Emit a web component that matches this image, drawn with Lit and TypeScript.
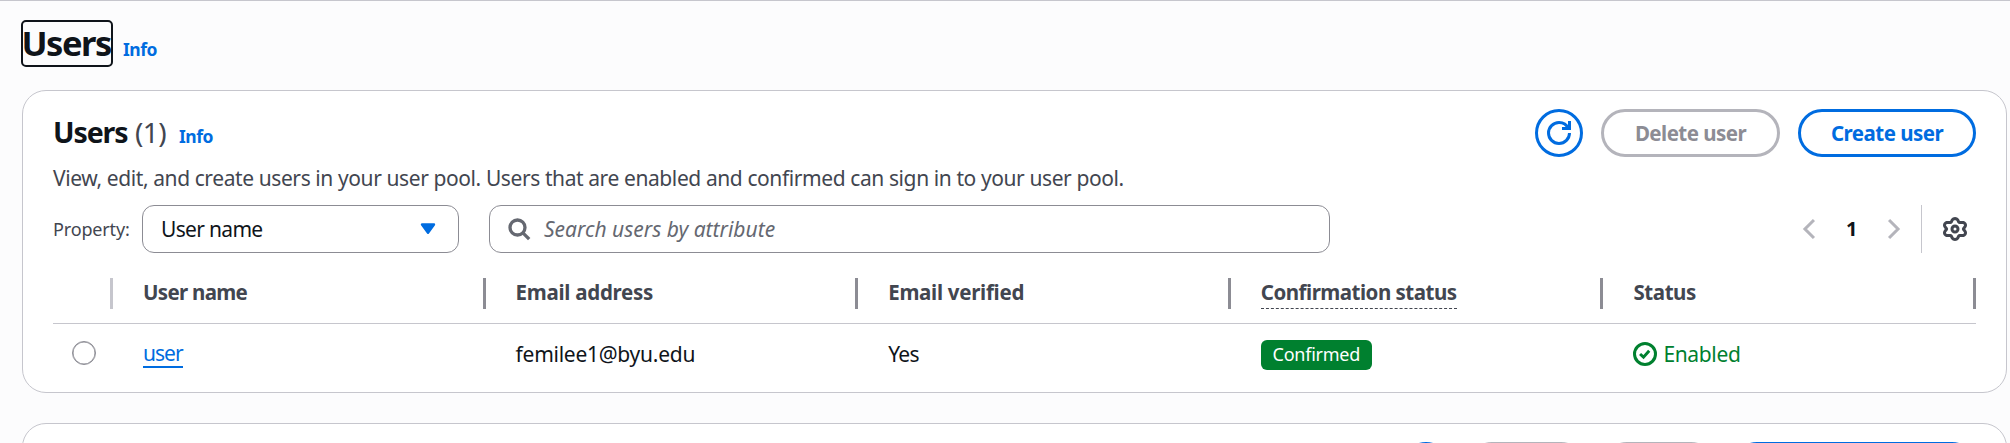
import { LitElement, html, css, svg } from "lit";
import { customElement } from "lit/decorators.js";

const gearOutline = (): string => {
  const points: string[] = [];
  for (let i = 0; i < 96; i++) {
    const t = (i / 96) * Math.PI * 2;
    const r = 6.1 + 0.95 * Math.cos(6 * t) - 0.12 * Math.cos(12 * t);
    const x = 8 + 1.12 * r * Math.sin(t);
    const y = 8 - r * Math.cos(t);
    points.push(`${x.toFixed(2)} ${y.toFixed(2)}`);
  }
  return `M${points.join("L")}Z`;
};

const icon = (name: string, body: unknown) =>
  html`<svg class="icon ${name}" viewBox="0 0 16 16">${body}</svg>`;

const refreshIcon = icon(
  "refresh-icon",
  svg`<path d="M10 5h5V0"/><path d="M15 8a7 7 0 0 1-14 0 7 7 0 0 1 7-7 6.9 6.9 0 0 1 6.3 4"/>`
);
const searchIcon = icon("search-icon", svg`<circle cx="7" cy="7" r="5"/><path d="m10.6 10.6 4.2 4.2"/>`);
const caretIcon = icon("caret-icon", svg`<path d="M4 5h8l-4 5.5z"/>`);
const prevIcon = icon("angle-icon", svg`<path d="M11.3 2 5.3 8l6 6"/>`);
const nextIcon = icon("angle-icon", svg`<path d="m4.7 2 6 6-6 6"/>`);
const gearIcon = icon("gear-icon", svg`<path d=${gearOutline()}/><circle cx="8" cy="8" r="2"/>`);
const checkIcon = icon("check-icon", svg`<circle cx="8" cy="8" r="7"/><path d="m4.7 8 2.3 2.1 3.8-4.2"/>`);

@customElement("app-root")
export class AppRoot extends LitElement {
  static styles = css`
    :host {
      display: block;
      box-sizing: border-box;
      height: 443px;
      overflow: hidden;
      background: #fcfcfd;
      border-top: 1px solid #c6c6cd;
      padding: 19px 3px 0 21px;
      font: 400 21px/30px "Noto Sans", sans-serif;
      letter-spacing: -0.41px;
      color: #0f141a;
      white-space: nowrap;
    }
    * { box-sizing: border-box; }
    h1, h2, p { margin: 0; }
    .icon {
      display: block;
      flex: none;
      width: 24px;
      height: 24px;
      fill: none;
      stroke: currentColor;
      stroke-width: 2;
    }
    .page-title { display: flex; gap: 10px; height: 70px; }
    h1 {
      width: 92px;
      height: 47px;
      border: 2px solid #0f141a;
      border-radius: 5px;
      font-size: 34.5px;
      line-height: 42px;
      letter-spacing: -1.5px;
      text-indent: -1.5px;
    }
    .info {
      color: #006ce0;
      font-size: 17.5px;
      font-weight: 700;
      letter-spacing: -0.5px;
    }
    .page-title .info { padding-top: 14px; }
    .card {
      width: 1985px;
      margin-left: 1px;
      padding: 18px 30px 0 30px;
      border: 1px solid #c6c6cd;
      border-radius: 24px;
      background: #fff;
    }
    .users-card { height: 303px; }
    .next-card { height: 120px; margin-top: 30px; }
    .card-header { display: flex; justify-content: space-between; height: 83px; }
    .heading { display: flex; padding-top: 5px; height: 53px; line-height: 36px; }
    h2 { width: 82px; font-size: 28.5px; line-height: 36px; letter-spacing: -1.1px; }
    .count { width: 44px; font-size: 28px; letter-spacing: -0.6px; color: #424650; }
    .heading .info { padding-top: 4px; }
    .description { color: #424650; padding-top: 1px; letter-spacing: -0.405px; }
    .actions { display: flex; gap: 18px; height: 48px; }
    .button {
      display: flex;
      align-items: center;
      justify-content: center;
      height: 48px;
      border: 3px solid #006ce0;
      border-radius: 24px;
      color: #006ce0;
      font-size: 20.5px;
      font-weight: 700;
      letter-spacing: -0.53px;
      padding-bottom: 1px;
    }
    .round { width: 48px; padding: 0; }
    .disabled { border-color: #b4b4bb; color: #8c8c94; }
    .delete { width: 179px; }
    .create { width: 178px; }
    .small { width: 117px; }
    .medium { width: 112px; }
    .wide { width: 243px; }
    .toolbar { display: flex; align-items: center; height: 48px; margin-top: 13px; }
    .label { width: 89px; font-size: 18px; letter-spacing: -0.15px; color: #424650; }
    .field {
      display: flex;
      align-items: center;
      height: 48px;
      border: 1px solid #8c8c94;
      border-radius: 12px;
    }
    .select {
      width: 317px;
      justify-content: space-between;
      padding: 0 18px;
      letter-spacing: -0.68px;
    }
    .search { width: 841px; margin-left: 30px; padding-left: 17px; gap: 13px; color: #656871; letter-spacing: 0; }
    .placeholder { font-style: italic; }
    .search-icon { stroke-width: 2.2; }
    .caret-icon { color: #006ce0; fill: currentColor; stroke-width: 1.6; stroke-linejoin: round; }
    .angle-icon { color: #b4b4bb; }
    .pager { display: flex; align-items: center; height: 48px; margin-left: auto; }
    .page-number { width: 61px; text-align: center; font-size: 20px; font-weight: 700; }
    .preferences { display: flex; align-items: center; height: 48px; margin-left: 15px; padding: 0 9px 0 21px; border-left: 1px solid #c6c6cd; color: #424650; }
    .row { display: grid; grid-template-columns: 60px repeat(5, minmax(0, 1fr)); }
    .head {
      height: 71px;
      padding-top: 24px;
      border-bottom: 1px solid #c6c6cd;
      font-size: 20.5px;
      font-weight: 700;
      color: #424650;
    }
    .head-cell { display: flex; align-items: flex-start; justify-content: space-between; padding-left: 30px; }
    .divider { width: 3px; height: 31px; margin-top: 1px; background: #8c8c94; }
    .light { background: #c6c6cd; margin-left: auto; }
    .select-cell { padding-left: 0; }
    .tight { letter-spacing: -0.7px; }
    .loose { letter-spacing: -0.28px; }
    .hint { display: block; height: 32px; border-bottom: 1px dashed #424650; letter-spacing: -0.5px; }
    .cell { padding: 15px 0 0 30px; }
    .radio-cell { padding: 17px 0 0 19px; }
    .radio { width: 24px; height: 24px; border: 1px solid #8c8c94; border-radius: 50%; box-shadow: inset 0 0 0 0.5px #8c8c94; }
    .link {
      display: block;
      width: 40px;
      height: 28px;
      margin-top: 1px;
      line-height: 27px;
      border-bottom: 2px solid #006ce0;
      color: #006ce0;
      letter-spacing: -1px;
    }
    .badge {
      display: block;
      width: 111px;
      height: 30px;
      margin-top: 1px;
      border-radius: 6px;
      background: #00802f;
      color: #fff;
      font-size: 18px;
      line-height: 29px;
      letter-spacing: -0.25px;
      text-align: center;
    }
    .status { display: flex; gap: 6px; color: #00802f; letter-spacing: -0.35px; }
    .check-icon { margin-top: 3px; }
    .email { letter-spacing: -0.26px; }
  `;

  render() {
    return html`
      <div class="page-title">
        <h1>Users</h1>
        <span class="info">Info</span>
      </div>
      <section class="card users-card">
        <div class="card-header">
          <div>
            <div class="heading">
              <h2>Users</h2>
              <span class="count">(1)</span>
              <span class="info">Info</span>
            </div>
            <p class="description">View, edit, and create users in your user pool. Users that are enabled and confirmed can sign in to your user pool.</p>
          </div>
          <div class="actions">
            <div class="button round">${refreshIcon}</div>
            <div class="button disabled delete">Delete user</div>
            <div class="button create">Create user</div>
          </div>
        </div>
        <div class="toolbar">
          <span class="label">Property:</span>
          <div class="field select"><span>User name</span>${caretIcon}</div>
          <div class="field search">${searchIcon}<span class="placeholder">Search users by attribute</span></div>
          <div class="pager">
            ${prevIcon}<span class="page-number">1</span>${nextIcon}
            <div class="preferences">${gearIcon}</div>
          </div>
        </div>
        <div class="row head">
          <div class="head-cell select-cell"><i class="divider light"></i></div>
          <div class="head-cell tight">User name<i class="divider"></i></div>
          <div class="head-cell loose">Email address<i class="divider"></i></div>
          <div class="head-cell loose">Email verified<i class="divider"></i></div>
          <div class="head-cell"><span class="hint">Confirmation status</span><i class="divider"></i></div>
          <div class="head-cell">Status<i class="divider"></i></div>
        </div>
        <div class="row">
          <div class="radio-cell"><div class="radio"></div></div>
          <div class="cell"><span class="link">user</span></div>
          <div class="cell email">femilee1@byu.edu</div>
          <div class="cell tight">Yes</div>
          <div class="cell"><span class="badge">Confirmed</span></div>
          <div class="cell status">${checkIcon}Enabled</div>
        </div>
      </section>
      <section class="card next-card">
        <div class="card-header">
          <div></div>
          <div class="actions">
            <div class="button round"></div>
            <div class="button disabled small"></div>
            <div class="button disabled medium"></div>
            <div class="button wide"></div>
          </div>
        </div>
      </section>
    `;
  }
}
